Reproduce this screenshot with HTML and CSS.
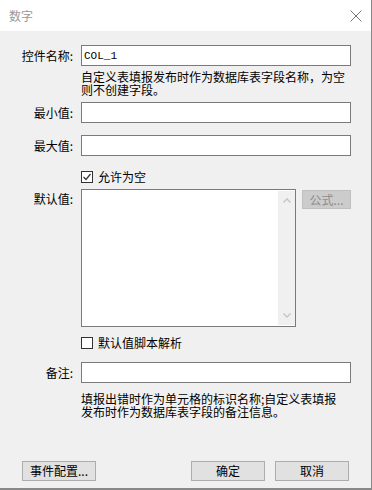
FILE: index.html
```html
<html>
<head>
 <meta charset="utf-8">
 <link rel="stylesheet" href="styles.css">
</head>
<body>
 <div class="dialog">
  <div class="titlebar">
   <span class="title">数字</span>
   <svg class="close" width="12" height="12" viewBox="0 0 12 12">
    <path d="M0.5 0.5 L11.5 11.5 M11.5 0.5 L0.5 11.5" stroke="#777" stroke-width="1" fill="none"/>
   </svg>
  </div>
  <div class="form">
   <div class="row first">
    <span class="label">控件名称:</span>
    <div class="input"><span class="value">COL_1</span></div>
   </div>
   <div class="hint hint-name">自定义表填报发布时作为数据库表字段名称，为空<br>则不创建字段。</div>
   <div class="row min">
    <span class="label">最小值:</span>
    <div class="input"></div>
   </div>
   <div class="row max">
    <span class="label">最大值:</span>
    <div class="input"></div>
   </div>
   <div class="check allow-empty">
    <span class="box">
     <svg width="10" height="10" viewBox="0 0 10 10"><path d="M1.5 5 L4 7.5 L8.5 2" stroke="#333" stroke-width="1.2" fill="none"/></svg>
    </span>
    <span>允许为空</span>
   </div>
   <div class="row default">
    <span class="label">默认值:</span>
    <div class="default-cell">
     <div class="textarea">
      <div class="scrollbar">
       <svg width="8" height="5" viewBox="0 0 8 5"><path d="M0.5 4.5 L4 1 L7.5 4.5" stroke="#c3c3c3" stroke-width="1.3" fill="none"/></svg>
       <svg width="8" height="5" viewBox="0 0 8 5"><path d="M0.5 0.5 L4 4 L7.5 0.5" stroke="#c3c3c3" stroke-width="1.3" fill="none"/></svg>
      </div>
     </div>
     <button class="btn formula" disabled>公式...</button>
    </div>
   </div>
   <div class="check script">
    <span class="box"></span>
    <span>默认值脚本解析</span>
   </div>
   <div class="row note">
    <span class="label">备注:</span>
    <div class="input"></div>
   </div>
   <div class="hint hint-note">填报出错时作为单元格的标识名称;自定义表填报<br>发布时作为数据库表字段的备注信息。</div>
  </div>
  <div class="footer">
   <button class="btn">事件配置...</button>
   <div class="actions">
    <button class="btn">确定</button>
    <button class="btn">取消</button>
   </div>
  </div>
 </div>
</body>
</html>
```
FILE: styles.css
```css
body {
 margin: 0;
 font-family: "Noto Sans CJK SC", "Liberation Sans", sans-serif;
 font-size: 12px;
 color: #000;
}
.dialog {
 width: 372px;
 height: 490px;
 box-sizing: border-box;
 background: #f0f0f0;
 border-right: 1px solid #888;
 border-bottom: 2px solid #888;
 display: flex;
 flex-direction: column;
}
.titlebar {
 height: 31px;
 flex: none;
 background: #fff;
 display: flex;
 align-items: center;
 justify-content: space-between;
 padding: 0 9px;
}
.title {
 color: #999;
 line-height: 12px;
}
.form {
 flex: 1;
 padding: 14px 20px 0 0;
 display: flex;
 flex-direction: column;
}
.row {
 display: grid;
 grid-template-columns: 73px 1fr;
 column-gap: 8px;
 align-items: center;
}
.label {
 text-align: right;
 line-height: 12px;
}
.input {
 height: 21px;
 box-sizing: border-box;
 border: 1px solid #7a7a7a;
 background: #fff;
 display: flex;
 align-items: center;
 padding-left: 2px;
}
.value {
 font-family: "Liberation Mono", monospace;
 font-size: 11px;
}
.hint {
 padding-left: 81px;
 line-height: 13px;
 white-space: nowrap;
}
.hint-name {
 margin-top: 4px;
}
.min {
 margin-top: 6px;
}
.max {
 margin-top: 12px;
}
.check {
 padding-left: 81px;
 display: flex;
 align-items: center;
 gap: 5px;
 line-height: 13px;
}
.allow-empty {
 margin-top: 14px;
}
.box {
 width: 12px;
 height: 12px;
 box-sizing: border-box;
 border: 1px solid #333;
 background: #fff;
 display: flex;
 align-items: center;
 justify-content: center;
}
.default {
 margin-top: 6px;
 align-items: start;
}
.default .label {
 padding-top: 4px;
}
.default-cell {
 display: flex;
 gap: 6px;
 align-items: flex-start;
}
.textarea {
 width: 215px;
 height: 138px;
 box-sizing: border-box;
 border: 1px solid #7a7a7a;
 background: #fff;
 padding: 1px 0;
 display: flex;
 justify-content: flex-end;
}
.scrollbar {
 width: 17px;
 background: #f0f0f0;
 display: flex;
 flex-direction: column;
 justify-content: space-between;
 align-items: center;
 padding: 7px 0;
}
.btn {
 height: 20px;
 width: 74px;
 box-sizing: border-box;
 border: 1px solid #adadad;
 background: #e1e1e1;
 font: inherit;
 line-height: 12px;
 padding: 0;
 color: #000;
}
.formula {
 width: 49px;
 height: 19px;
 margin-top: 1px;
 background: #cccccc;
 border-color: #bfbfbf;
 color: #8c8c8c;
}
.script {
 margin-top: 9px;
}
.note {
 margin-top: 13px;
}
.hint-note {
 margin-top: 9px;
}
.footer {
 display: flex;
 justify-content: space-between;
 padding: 0 22px 7px 22px;
}
.actions {
 display: flex;
 gap: 10px;
}
```
